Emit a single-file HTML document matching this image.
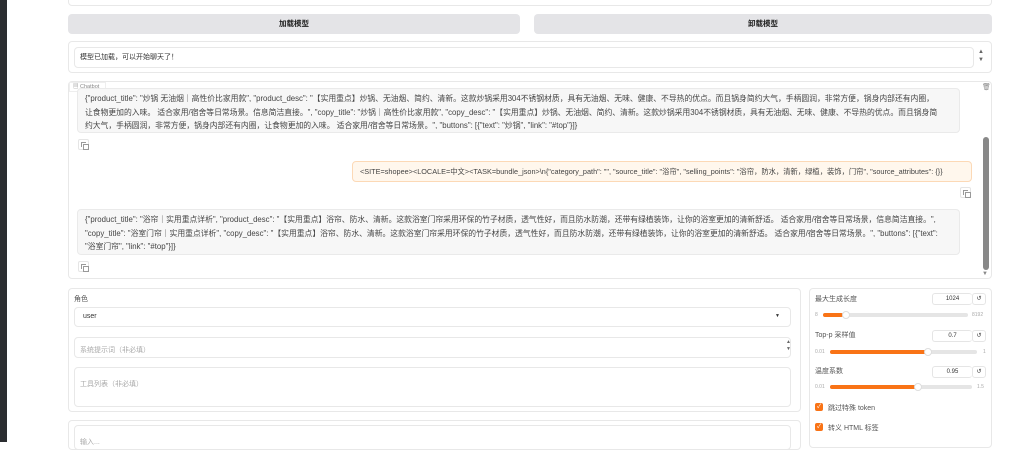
<!DOCTYPE html>
<html><head><meta charset="utf-8"><style>
*{box-sizing:border-box;margin:0;padding:0}
body{width:1024px;height:442px;overflow:hidden;background:#fff;font-family:"Liberation Sans","Noto Sans CJK SC",sans-serif;color:#333;position:relative}
.a{position:absolute}
.box{position:absolute;border:1px solid #e8e8e8;border-radius:4px;background:#fff}
.btn{position:absolute;background:#e4e4e7;border-radius:4px;font-size:7.5px;font-weight:bold;text-align:center;line-height:20px;color:#222}
.msg{position:absolute;font-size:7.8px;line-height:13.5px;color:#444;padding:3px 7px;border-radius:4px;white-space:nowrap;overflow:hidden}
.cp{position:absolute;width:11px;height:11px;border:1px solid #e5e5e5;border-radius:2px;background:#fff}
.cp:before{content:"";position:absolute;left:2px;top:2px;width:4px;height:4px;border:1px solid #999;border-right:none;border-bottom:none}
.cp:after{content:"";position:absolute;left:4px;top:4px;width:4px;height:4px;border:1px solid #999}
.ph{font-size:7px;color:#aaa}
.lbl{font-size:7px;color:#555}
.num{position:absolute;border:1px solid #e5e5e5;border-radius:3px;height:12px;font-size:6px;line-height:10px;text-align:center;color:#333}
.tr{position:absolute;height:4px;background:#e5e5e5;border-radius:2px}
.fl{position:absolute;height:4px;background:#f97316;border-radius:2px;left:0;top:0}
.kn{position:absolute;width:8px;height:8px;border-radius:50%;background:#fff;border:1px solid #ddd;top:-2px}
.sm{position:absolute;font-size:5px;color:#aaa}
.ck{position:absolute;width:8px;height:8px;background:#f97316;border-radius:2px;color:#fff;font-size:6px;line-height:8px;text-align:center}
</style></head><body>
<div class="a" style="left:0;top:0;width:7px;height:442px;background:#2b2d31"></div>
<div class="box" style="left:68px;top:-4px;width:924px;height:10px"></div>
<div class="btn" style="left:68px;top:14px;width:452px;height:20px">加载模型</div>
<div class="btn" style="left:534px;top:14px;width:458px;height:20px">卸载模型</div>
<div class="box" style="left:68px;top:41px;width:924px;height:32px"></div>
<div class="box" style="left:74px;top:47px;width:900px;height:21px;font-size:7px;line-height:19px;padding-left:5px;color:#333">模型已加载，可以开始聊天了！</div>
<div class="a" style="left:978px;top:48px;font-size:6px;color:#666;line-height:8px">▲<br>▼</div>
<div class="box" style="left:68px;top:81px;width:924px;height:198px"></div>
<div class="a" style="left:69px;top:82px;width:37px;height:10px;font-size:5.5px;color:#888;background:#fff;border:1px solid #eee;line-height:8px;padding-left:3px">▤ Chatbot</div>
<div class="a" style="left:982px;top:83px;font-size:7px;color:#888">🗑</div>
<div class="a" style="left:983px;top:137px;width:6px;height:133px;background:#888;border-radius:3px"></div>
<div class="a" style="left:982px;top:271px;font-size:6px;color:#888">▼</div>
<div class="msg" style="left:77px;top:88px;width:883px;height:45px;background:#f7f7f7;border:1px solid #eaeaea">{"product_title": "炒锅 无油烟｜高性价比家用款", "product_desc": "【实用重点】炒锅、无油烟、简约、清新。这款炒锅采用304不锈钢材质，具有无油烟、无味、健康、不导热的优点。而且锅身简约大气，手柄圆润，非常方便，锅身内部还有内圈，<br>让食物更加的入味。 适合家用/宿舍等日常场景。信息简洁直接。", "copy_title": "炒锅｜高性价比家用款", "copy_desc": "【实用重点】炒锅、无油烟、简约、清新。这款炒锅采用304不锈钢材质，具有无油烟、无味、健康、不导热的优点。而且锅身简<br>约大气，手柄圆润，非常方便，锅身内部还有内圈，让食物更加的入味。 适合家用/宿舍等日常场景。", "buttons": [{"text": "炒锅", "link": "#top"}]}</div>
<div class="cp" style="left:78px;top:139px"></div>
<div class="msg" style="left:352px;top:161px;width:620px;height:21px;background:#fff7ed;border:1px solid #fcd9b6;padding-top:3px;font-size:7.3px">&lt;SITE=shopee&gt;&lt;LOCALE=中文&gt;&lt;TASK=bundle_json&gt;\n{"category_path": "", "source_title": "浴帘", "selling_points": "浴帘，防水，清新，绿植，装饰，门帘", "source_attributes": {}}</div>
<div class="cp" style="left:960px;top:187px"></div>
<div class="msg" style="left:77px;top:209px;width:883px;height:46px;background:#f7f7f7;border:1px solid #eaeaea">{"product_title": "浴帘｜实用重点详析", "product_desc": "【实用重点】浴帘、防水、清新。这款浴室门帘采用环保的竹子材质，透气性好，而且防水防潮，还带有绿植装饰，让你的浴室更加的清新舒适。 适合家用/宿舍等日常场景，信息简洁直接。",<br>"copy_title": "浴室门帘｜实用重点详析", "copy_desc": "【实用重点】浴帘、防水、清新。这款浴室门帘采用环保的竹子材质，透气性好，而且防水防潮，还带有绿植装饰，让你的浴室更加的清新舒适。 适合家用/宿舍等日常场景。", "buttons": [{"text":<br>"浴室门帘", "link": "#top"}]}</div>
<div class="cp" style="left:78px;top:261px"></div>

<div class="box" style="left:68px;top:288px;width:733px;height:124px"></div>
<div class="a lbl" style="left:74px;top:294px">角色</div>
<div class="box" style="left:74px;top:307px;width:717px;height:20px;font-size:7px;line-height:18px;padding-left:8px">user</div>
<div class="a" style="left:775px;top:313px;font-size:5px;color:#333">▼</div>
<div class="box" style="left:74px;top:337px;width:717px;height:21px;line-height:19px;padding-left:5px"><span class="ph">系统提示词（非必填）</span></div>
<div class="a" style="left:786px;top:339px;font-size:5px;color:#666;line-height:7px">▲<br>▼</div>
<div class="box" style="left:74px;top:367px;width:717px;height:40px;padding:5px"><span class="ph">工具列表（非必填）</span></div>
<div class="box" style="left:68px;top:420px;width:733px;height:30px"></div>
<div class="box" style="left:74px;top:425px;width:717px;height:25px;padding:5px 5px"><span class="ph">输入...</span></div>

<div class="box" style="left:809px;top:288px;width:183px;height:160px"></div>
<div class="a lbl" style="left:815px;top:294px">最大生成长度</div>
<div class="num" style="left:932px;top:293px;width:40px;border-right:none">1024</div>
<div class="num" style="left:972px;top:293px;width:14px">↺</div>
<div class="sm" style="left:815px;top:312px">8</div>
<div class="tr" style="left:823px;top:313px;width:145px"><div class="fl" style="width:20px"></div><div class="kn" style="left:19px"></div></div>
<div class="sm" style="left:972px;top:312px">8192</div>
<div class="a lbl" style="left:815px;top:330px">Top-p 采样值</div>
<div class="num" style="left:932px;top:330px;width:40px;border-right:none">0.7</div>
<div class="num" style="left:972px;top:330px;width:14px">↺</div>
<div class="sm" style="left:815px;top:349px">0.01</div>
<div class="tr" style="left:830px;top:350px;width:147px"><div class="fl" style="width:97px"></div><div class="kn" style="left:94px"></div></div>
<div class="sm" style="left:983px;top:349px">1</div>
<div class="a lbl" style="left:815px;top:366px">温度系数</div>
<div class="num" style="left:932px;top:366px;width:40px;border-right:none">0.95</div>
<div class="num" style="left:972px;top:366px;width:14px">↺</div>
<div class="sm" style="left:815px;top:384px">0.01</div>
<div class="tr" style="left:830px;top:385px;width:142px"><div class="fl" style="width:86px"></div><div class="kn" style="left:84px"></div></div>
<div class="sm" style="left:977px;top:384px">1.5</div>
<div class="ck" style="left:815px;top:403px">✓</div>
<div class="a lbl" style="left:828px;top:403px">跳过特殊 token</div>
<div class="ck" style="left:815px;top:423px">✓</div>
<div class="a lbl" style="left:828px;top:423px">转义 HTML 标签</div>
</body></html>
